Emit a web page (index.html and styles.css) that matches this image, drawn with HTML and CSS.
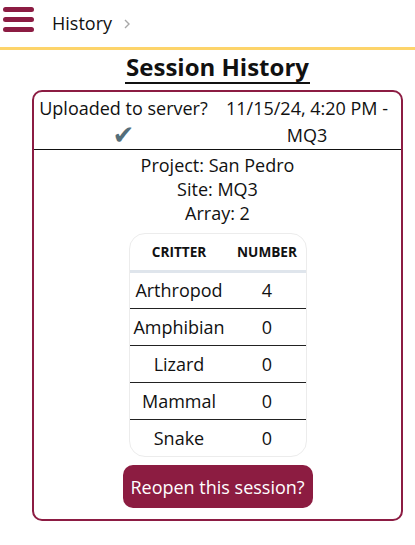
FILE: index.html
```html
<!DOCTYPE html>
<html>
<head>
<meta charset="utf-8">
<link rel="stylesheet" href="styles.css">
</head>
<body>
<header class="topbar">
  <div class="menu" aria-label="menu">
    <span class="bar"></span><span class="bar"></span><span class="bar"></span>
  </div>
  <span class="crumb">History</span>
  <svg class="chev" width="8" height="12" viewBox="0 0 8 12"><path d="M2 2 L6 6 L2 10" fill="none" stroke="#a8a8a8" stroke-width="1.4"/></svg>
</header>
<main class="page">
  <h1 class="title">Session History</h1>
  <section class="card">
    <div class="card-head">
      <div class="col">
        <div>Uploaded to server?</div>
        <div class="check">✔</div>
      </div>
      <div class="col">
        <div>11/15/24, 4:20 PM -</div>
        <div>MQ3</div>
      </div>
    </div>
    <div class="info">
      <div>Project: San Pedro</div>
      <div>Site: MQ3</div>
      <div>Array: 2</div>
    </div>
    <div class="table-wrap">
      <table class="critters">
        <thead>
          <tr><th>Critter</th><th>Number</th></tr>
        </thead>
        <tbody>
          <tr><td>Arthropod</td><td>4</td></tr>
          <tr><td>Amphibian</td><td>0</td></tr>
          <tr><td>Lizard</td><td>0</td></tr>
          <tr><td>Mammal</td><td>0</td></tr>
          <tr><td>Snake</td><td>0</td></tr>
        </tbody>
      </table>
    </div>
    <button class="reopen">Reopen this session?</button>
  </section>
</main>
</body>
</html>
```

FILE: styles.css
```css
* { box-sizing: border-box; }
html, body { margin: 0; padding: 0; background: #fff; }
body {
  font-family: "Open Sans", "Noto Sans", sans-serif;
  color: #111;
  width: 415px;
}
.topbar {
  height: 50px;
  border-bottom: 3px solid #fdd46a;
  display: flex;
  align-items: center;
  padding-left: 3px;
  padding-bottom: 2px;
}
.menu {
  width: 31px;
  display: flex;
  flex-direction: column;
  gap: 5px;
  margin-top: -6px;
}
.bar {
  display: block;
  height: 5px;
  border-radius: 3px;
  background: #8c1c43;
}
.crumb {
  margin-left: 18px;
  font-size: 18px;
  color: #111;
}
.chev { margin-left: 11px; margin-top: 2px; }
.page {
  padding-left: 32px;
  width: 403px;
}
.title {
  display: table;
  margin: 1px auto 0;
  text-align: center;
  font-size: 24px;
  font-weight: 700;
  line-height: 31px;
  border-bottom: 2px solid #111;
  padding: 0 1px;
}
.card {
  margin-top: 6px;
  border: 2px solid #8c1c43;
  border-radius: 10px;
  display: flex;
  flex-direction: column;
  align-items: center;
  padding-bottom: 11px;
}
.card-head {
  width: 100%;
  display: grid;
  grid-template-columns: 179px 1fr;
  border-bottom: 1px solid #111;
  font-size: 18px;
  line-height: 27px;
  padding: 3px 0 0;
}
.col { text-align: center; }
.check {
  color: #546e7a;
  font-size: 26px;
  line-height: 27px;
  height: 27px;
  font-family: "DejaVu Sans", sans-serif;
}
.info {
  text-align: center;
  font-size: 18px;
  line-height: 24px;
  padding-top: 3px;
}
.table-wrap {
  margin-top: 8px;
  width: 178px;
  border: 1.5px solid #ececec;
  border-radius: 16px;
  overflow: hidden;
}
.critters {
  width: 100%;
  border-collapse: collapse;
}
.critters th {
  font-size: 13.6px;
  font-weight: 700;
  text-transform: uppercase;
  height: 37px;
  border-bottom: 3px solid #dfe5ec;
  padding: 0;
  text-align: center;
}
.critters th:first-child { width: 99px; }
.critters td {
  font-size: 18px;
  height: 37px;
  text-align: center;
  padding: 0;
  border-top: 1px solid #222;
}
.critters tbody tr:first-child td { border-top: none; }
.reopen {
  margin-top: 8px;
  width: 190px;
  height: 43px;
  border: none;
  border-radius: 10px;
  background: #8c1c41;
  color: #fff;
  font-family: "Open Sans", "Noto Sans", sans-serif;
  font-size: 18px;
  padding: 0;
}
```
